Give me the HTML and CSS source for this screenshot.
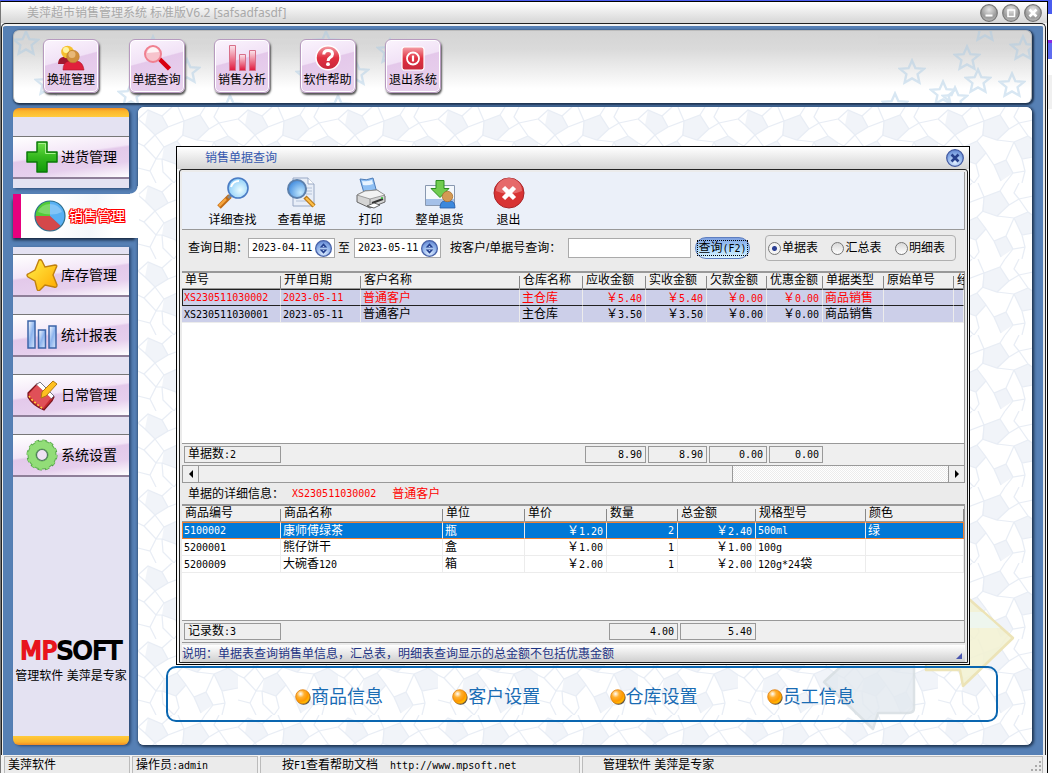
FILE: index.html
```html
<!DOCTYPE html>
<html lang="zh-CN">
<head>
<meta charset="utf-8">
<title>美萍超市销售管理系统</title>
<link rel="stylesheet" href="styles.css">
</head>
<body>
<svg class="defs" aria-hidden="true">
  <defs>
    <linearGradient id="gRed" x1="0" y1="0" x2="0" y2="1"><stop offset="0" stop-color="#f5a0a8"/><stop offset=".5" stop-color="#e03040"/><stop offset="1" stop-color="#c8283c"/></linearGradient>
    <linearGradient id="gBar" x1="0" y1="0" x2="0" y2="1"><stop offset="0" stop-color="#fbe6ee"/><stop offset="1" stop-color="#e0183c"/></linearGradient>
    <linearGradient id="gBlueBar" x1="0" y1="0" x2="1" y2="1"><stop offset="0" stop-color="#ffffff"/><stop offset=".5" stop-color="#8db4ee"/><stop offset="1" stop-color="#d6e6fb"/></linearGradient>
    <linearGradient id="gGreen" x1="0" y1="0" x2="0" y2="1"><stop offset="0" stop-color="#6fe04a"/><stop offset=".5" stop-color="#34b81e"/><stop offset="1" stop-color="#119a08"/></linearGradient>
    <linearGradient id="gStar" x1="0" y1="0" x2="1" y2="1"><stop offset="0" stop-color="#fff04a"/><stop offset="1" stop-color="#ffa800"/></linearGradient>
    <radialGradient id="gLens" cx=".6" cy=".6" r=".6"><stop offset="0" stop-color="#eafcff"/><stop offset="1" stop-color="#8ccdf8"/></radialGradient>
    <radialGradient id="gLensDark" cx=".7" cy=".7" r=".8"><stop offset="0" stop-color="#c4eaff"/><stop offset="1" stop-color="#3a86dc"/></radialGradient>
    <radialGradient id="gBall" cx=".35" cy=".3" r=".75"><stop offset="0" stop-color="#fff"/><stop offset=".35" stop-color="#ffb030"/><stop offset=".7" stop-color="#ff9800"/><stop offset="1" stop-color="#ffd000"/></radialGradient>
    <radialGradient id="gGray" cx=".5" cy=".3" r=".7"><stop offset="0" stop-color="#e4e4e4"/><stop offset=".7" stop-color="#9a9a9a"/><stop offset="1" stop-color="#bcbcbc"/></radialGradient>
    <radialGradient id="gBlue" cx=".5" cy=".75" r=".75"><stop offset="0" stop-color="#e2efff"/><stop offset=".6" stop-color="#8fb2ea"/><stop offset="1" stop-color="#5f83cf"/></radialGradient>
    <pattern id="stone" width="100" height="76" patternUnits="userSpaceOnUse">
      <rect width="100" height="76" fill="#fff"/>
      <path fill="#f1f4f9" d="M10 3l14 6 6 11-13 8-10-10zM46 14l16-6 9 14-12 11-15-5zM76 35l14-6 10 7v13l-16 3zM26 40l13-6 9 12-10 11-14-5zM56 58l12-5 7 13-12 8z"/>
      <path fill="none" stroke="#e8edf5" stroke-width="1.2" d="M0 12l10-9 14 6 6 11-13 8-10-10-7-6M17 28L6 39l-6-3M17 28l9 12 13-6 6-6 1-14-16 6M24 9L34 0M46 14L40 0M46 14l16-6 9 14-12 11-15-5M62 8l5-8M71 22l10-6 19-4M81 16l-5-6 5-10M59 33l17 2 14-6-9-13M90 29l10 7M76 35l8 17 16-3M39 34l9 12-10 11-14-5-6 0-12-13M26 40l-8 12-6 12-12-3M48 46l8 12 12-5 8-18M56 58l7 16M68 53l7 13 12-2-3-12M38 57l3 12-5 7M75 66l-8 10M87 64l-3 12M24 52l1 13 11 11M12 64l6 12"/>
    </pattern>
    <symbol id="star" viewBox="-14 -14 28 28"><path d="M0-11.5L3.4-3.8 12-3.2 5.6 2.2 7.4 10.6 0 6.4-7.4 10.6-5.6 2.2-12-3.2-3.4-3.8z" fill="none" stroke="#a9cbe4" stroke-width="2.4"/></symbol>
    <symbol id="ball" viewBox="0 0 16 16"><circle cx="8.6" cy="8.8" r="7" fill="#554"/><circle cx="7.7" cy="7.7" r="7" fill="url(#gBall)" stroke="#e08010" stroke-width=".8"/></symbol>
    <symbol id="spin" viewBox="0 0 16 16"><circle cx="8" cy="8" r="7.4" fill="url(#gBlue)" stroke="#4862a8" stroke-width="1.2"/><path d="M8 3l3.6 4H4.400zM8 13l3.600-4H4.400z" fill="#233f8e"/><path d="M8 5.400l1 1.300H7zM8 10.600l1-1.300H7z" fill="#bcd2f8"/></symbol>
  </defs>
</svg>

<div class="app">
  <header class="titlebar">
    <h1 class="titlebar-text">美萍超市销售管理系统 标准版V6.2 [safsadfasdf]</h1>
    <div class="window-buttons">
      <button class="round" aria-label="最小化"><svg viewBox="0 0 18 18"><circle cx="9" cy="9" r="8.3" fill="url(#gGray)" stroke="#777" stroke-width="1.2"/><path d="M5.5 11.5h7" stroke="#fff" stroke-width="2"/></svg></button>
      <button class="round" aria-label="最大化"><svg viewBox="0 0 18 18"><circle cx="9" cy="9" r="8.3" fill="url(#gGray)" stroke="#777" stroke-width="1.2"/><path d="M6 6h6.500v6.500H6z" fill="none" stroke="#fff" stroke-width="1.6"/></svg></button>
      <button class="round" aria-label="关闭"><svg viewBox="0 0 18 18"><circle cx="9" cy="9" r="8.3" fill="url(#gGray)" stroke="#777" stroke-width="1.2"/><path d="M5.500 5.500l7 7M12.500 5.500l-7 7" stroke="#fff" stroke-width="2.6"/></svg></button>
    </div>
  </header>

  <div class="frame">
    <nav class="toolbar" aria-label="常用功能">
      <svg class="stars stars-left" viewBox="0 0 400 73" aria-hidden="true">
        <use href="#star" x="-2" y="-2" width="28" height="28"/><use href="#star" x="20" y="38" width="28" height="28"/><use href="#star" x="103" y="50" width="28" height="28"/><use href="#star" x="159" y="26" width="28" height="28"/><use href="#star" x="125" y="3" width="28" height="28"/><use href="#star" x="202" y="62" width="28" height="28"/><use href="#star" x="298" y="-2" width="28" height="28"/><use href="#star" x="310" y="62" width="28" height="28"/><use href="#star" x="281" y="30" width="28" height="28"/><use href="#star" x="328" y="28" width="28" height="28"/><use href="#star" x="362" y="6" width="28" height="28"/>
      </svg>
      <svg class="stars stars-right" viewBox="0 0 170 73" aria-hidden="true">
        <use href="#star" x="110" y="-16" width="28" height="28"/><use href="#star" x="148" y="3" width="28" height="28"/><use href="#star" x="92" y="13" width="28" height="28"/><use href="#star" x="37" y="27" width="28" height="28"/><use href="#star" x="103" y="36" width="28" height="28"/><use href="#star" x="137" y="40" width="28" height="28"/><use href="#star" x="68" y="48" width="28" height="28"/><use href="#star" x="80" y="54" width="28" height="28"/><use href="#star" x="20" y="60" width="28" height="28"/>
      </svg>
      <div class="toolbar-buttons">
        <button class="tile"><svg viewBox="0 0 28 26"><path d="M1 19q0-6 5-7h7q4 1 4 7z" fill="#a01830"/><circle cx="10.500" cy="7" r="6.300" fill="#f5c02e"/><circle cx="9" cy="5" r="3" fill="#fff2a0"/><path d="M6 25q0-8 6-9h8q6 1 7 9z" fill="#e0203c" stroke="#b01028" stroke-width=".6"/><circle cx="16" cy="11.500" r="6.300" fill="#cf8f3c" stroke="#b0742c" stroke-width=".5"/><circle cx="15" cy="9.500" r="3.500" fill="#e8b878"/></svg><span>换班管理</span></button>
        <button class="tile"><svg viewBox="0 0 28 26"><path d="M16.500 14l10 10" stroke="#d80010" stroke-width="4.500"/><circle cx="10" cy="9" r="8" fill="#f7c3cc" stroke="#f08090" stroke-width="2"/><path d="M4 8q1-5 6-6 5 1 6 5z" fill="#fff" opacity=".8"/></svg><span>单据查询</span></button>
        <button class="tile"><svg viewBox="0 0 28 26"><g fill="url(#gBar)" stroke="#d8708a" stroke-width="1"><path d="M1.500.500h6v25h-6z"/><path d="M11.500 9.500h6v16h-6z"/><path d="M21.500 5.500h6v20h-6z"/></g></svg><span>销售分析</span></button>
        <button class="tile"><svg viewBox="0 0 28 26"><circle cx="14" cy="12.800" r="12" fill="url(#gRed)" stroke="#fff" stroke-width="1.500"/><path d="M9.800 9.500q0-4 4.300-4t4.400 3.600q0 2-2.400 3.500-2 1.200-2 3.400" fill="none" stroke="#fff" stroke-width="3"/><circle cx="14" cy="19.200" r="1.900" fill="#fff"/></svg><span>软件帮助</span></button>
        <button class="tile"><svg viewBox="0 0 28 26"><rect x="3" y="2" width="22" height="23" rx="2.500" fill="url(#gRed)" stroke="#fff" stroke-width="1.200"/><circle cx="14" cy="13.500" r="6" fill="none" stroke="#fff" stroke-width="1.800"/><path d="M14 10.500v6" stroke="#fff" stroke-width="2.200"/></svg><span>退出系统</span></button>
      </div>
    </nav>

    <div class="workspace">
      <nav class="sidebar" aria-label="主菜单">
        <div class="side-group side-top">
          <button class="side-item"><svg viewBox="0 0 32 32"><path d="M11 1h10v10h10v10H21v10H11V21H1V11h10z" fill="url(#gGreen)" stroke="#0b7a08" stroke-width="1.500" stroke-linejoin="round"/><path d="M12.500 2.500h7v10h10" fill="none" stroke="#a8f090" stroke-width="1"/></svg><span>进货管理</span></button>
        </div>
        <button class="side-active"><svg viewBox="0 0 32 32"><circle cx="16" cy="16" r="15" fill="#2d94ea"/><path d="M16 16V1a15 15 0 0 1 11 25z" fill="#58b0f4"/><path d="M16 16H1A15 15 0 0 1 16 1z" fill="#52cc38"/><path d="M16 16L27 26.200A15 15 0 0 1 1 16z" fill="#d4484a"/><path d="M4 12a13 13 0 0 1 24 0q-10 5-24 0z" fill="#fff" opacity=".25"/><circle cx="16" cy="16" r="15" fill="none" stroke="#2f6f8c" stroke-width="1.200"/></svg><span>销售管理</span></button>
        <div class="side-group side-rest">
          <button class="side-item"><svg viewBox="0 0 32 32"><path d="M13 1q2-1 3 1l3 6 10-2q3 0 1 3l-3 7 4 10q0 3-3 2l-9-2-5 5q-2 2-3-1l-2-8-7-4q-2-2 0-3l7-4z" fill="url(#gStar)" stroke="#c08010" stroke-width="1.400"/></svg><span>库存管理</span></button>
          <button class="side-item"><svg viewBox="0 0 32 32"><g fill="url(#gBlueBar)" stroke="#3c64a8" stroke-width="1.500"><path d="M2 2h7v27H2z"/><path d="M12.500 11h7v18h-7z"/><path d="M23 7h7v22h-7z"/></g></svg><span>统计报表</span></button>
          <button class="side-item"><svg viewBox="0 0 32 32"><path d="M2 14L11 5l5 2 4 5 8 6-2 4-8 9q-12-5-16-13z" fill="#c82830" stroke="#7a1820" stroke-width="1.200"/><path d="M10 6l4-3 14 14-3 3z" fill="#fff" stroke="#556" stroke-width=".8"/><path d="M3 15l8-9 14 13-8 10q-9-5-14-14z" fill="#e05058"/><path d="M3 17l4 5 5 4 5 4" fill="none" stroke="#ffd040" stroke-width="1.600" stroke-dasharray="2 2"/><path d="M27 2l4 3-11 12-5 2 1-6z" fill="#ffc020" stroke="#b07810" stroke-width="1"/></svg><span>日常管理</span></button>
          <button class="side-item"><svg viewBox="0 0 32 32"><circle cx="16" cy="16" r="13.500" fill="none" stroke="#4a9a40" stroke-width="4" stroke-dasharray="4 3.060"/><circle cx="16" cy="16" r="10" fill="none" stroke="#5fae50" stroke-width="9"/><circle cx="16" cy="16" r="13" fill="none" stroke="#8fdc74" stroke-width="4" stroke-dasharray="3 3.800"/><circle cx="16" cy="16" r="10" fill="none" stroke="#92dd78" stroke-width="7"/><circle cx="16" cy="16" r="5.500" fill="#efe2f4" stroke="#4c7c58" stroke-width="1.200"/></svg><span>系统设置</span></button>
          <div class="brand">
            <div class="logo"><span class="logo-mp">MP</span><span>SOFT</span></div>
            <p class="brand-text">管理软件 美萍是专家</p>
          </div>
        </div>
      </nav>

      <main class="main">
        <svg class="stone" aria-hidden="true"><rect width="100%" height="100%" fill="url(#stone)"/></svg>
        <svg class="arrows" viewBox="0 0 196 145" aria-hidden="true">
          <path d="M141 2l52 46-50 48-3-16h-34V20h35z" fill="#f3f2d4" stroke="#ece2b0" stroke-width="2.500" stroke-linejoin="round" opacity=".9"/>
          <path d="M130 22h32l18 16h-50z" fill="#eef6ee"/>
          <path d="M4 92L50 50v12h38q6 0 6 6v50q0 5-6 5H58l-5 16z" fill="#e4eaf0" stroke="#d7dee2" stroke-width="2.500" stroke-linejoin="round" opacity=".85"/>
        </svg>
        <nav class="quick" aria-label="快捷设置">
          <a href="#"><svg><use href="#ball"/></svg>商品信息</a>
          <a href="#"><svg><use href="#ball"/></svg>客户设置</a>
          <a href="#"><svg><use href="#ball"/></svg>仓库设置</a>
          <a href="#"><svg><use href="#ball"/></svg>员工信息</a>
        </nav>

        <section class="dialog" role="dialog" aria-labelledby="dlg-title">
          <header class="dialog-title">
            <h2 id="dlg-title">销售单据查询</h2>
            <button class="round" aria-label="关闭窗口"><svg viewBox="0 0 18 18"><circle cx="9" cy="9" r="8.300" fill="url(#gBlue)" stroke="#4058a0" stroke-width="1.200"/><path d="M5.500 5.500l7 7M12.500 5.500l-7 7" stroke="#27408c" stroke-width="2.600"/></svg></button>
          </header>
          <div class="dialog-frame">
            <div class="actions">
              <button><svg viewBox="0 0 32 32"><path d="M2 30l11-11" stroke="#c06a14" stroke-width="5"/><path d="M2 29l7-7" stroke="#f5a43c" stroke-width="2.500"/><path d="M11 21l3-3" stroke="#888" stroke-width="3"/><circle cx="21" cy="11" r="10" fill="url(#gLens)" stroke="#4a7cc4" stroke-width="1.600"/><path d="M14 10q2-6 8-6" fill="none" stroke="#fff" stroke-width="2"/></svg><span>详细查找</span></button>
              <button><svg viewBox="0 0 32 32"><path d="M7 1h15l6 6v22H7z" fill="#e8eef8" stroke="#98a8c4"/><path d="M22 1v6h6" fill="#fff" stroke="#98a8c4"/><path d="M18 11h8M20 14h6M20 17h6M10 24h10" stroke="#b4c2d8"/><path d="M19 20l9 9" stroke="#b87818" stroke-width="4.500"/><path d="M20 21l8 8" stroke="#ffc048" stroke-width="2.200"/><circle cx="11" cy="12" r="9" fill="url(#gLensDark)" stroke="#5c80ac" stroke-width="2"/></svg><span>查看单据</span></button>
              <button><svg viewBox="0 0 32 32"><path d="M5 2q6 2 13-1l4 15H9z" fill="#8fc0f4" stroke="#4c7cb8"/><path d="M7 4q5 1 10-1l1 4q-5 2-10 1z" fill="#e8f4ff"/><path d="M2 18l8-4 12-1 8 6v6l-15 6L2 25z" fill="#d4d4d4" stroke="#666"/><path d="M2 18l13 4 15-4-8-5-12 1z" fill="#f2f2f2" stroke="#888" stroke-width=".8"/><path d="M15 22v9" stroke="#888"/><path d="M17 26l11-4" stroke="#333" stroke-width="2"/><path d="M12 29l7 2 6-3-6-2z" fill="#fff" stroke="#444" stroke-width=".8"/><path d="M26 21h2" stroke="#30c030" stroke-width="1.500"/></svg><span>打印</span></button>
              <button><svg viewBox="0 0 32 32"><path d="M1.500 8.500h29v20h-29z" fill="#f4f8fc" stroke="#8898b0"/><path d="M2 22h28v6H2z" fill="#a4c0e8"/><path d="M12 3.500h8v8h5l-9 9-9-9h5z" fill="#70cc50" stroke="#2c8c20"/><path d="M16 31q0-7 5-7h5q5 0 5 7z" fill="#3c88dc" stroke="#245ca8" stroke-width=".8"/><circle cx="23.500" cy="19.500" r="5.200" fill="#d49a54" stroke="#a87030" stroke-width=".8"/></svg><span>整单退货</span></button>
              <button><svg viewBox="0 0 32 32"><circle cx="16" cy="16" r="15" fill="#d83434" stroke="#a82428"/><path d="M3 14a13 13 0 0 1 26 0q-13 6-26 0z" fill="#f09090" opacity=".6"/><path d="M10.500 10.500l11 11M21.500 10.500l-11 11" stroke="#fff" stroke-width="4.500"/></svg><span>退出</span></button>
            </div>

            <form class="query">
              <label for="from">查询日期：</label>
              <div class="date"><input id="from" type="text" value="2023-04-11"><button type="button" aria-label="选择开始日期"><svg><use href="#spin"/></svg></button></div>
              <label class="to" for="until">至</label>
              <div class="date"><input id="until" type="text" value="2023-05-11"><button type="button" aria-label="选择结束日期"><svg><use href="#spin"/></svg></button></div>
              <label class="key" for="key">按客户/单据号查询：</label>
              <input class="keyword" id="key" type="text">
              <button class="search" type="button"><span class="focus">查询<span class="m">(F2)</span></span></button>
              <fieldset class="views">
                <label><input type="radio" name="view" checked>单据表</label>
                <label><input type="radio" name="view">汇总表</label>
                <label><input type="radio" name="view">明细表</label>
              </fieldset>
            </form>

            <div class="grid-area bills">
              <table>
                <colgroup><col class="c99"><col class="c80"><col class="c159"><col class="c63"><col class="c63"><col class="c61"><col class="c60"><col class="c56"><col class="c61"><col class="c70"><col></colgroup>
                <thead><tr><th>单号</th><th>开单日期</th><th>客户名称</th><th>仓库名称</th><th>应收金额</th><th>实收金额</th><th>欠款金额</th><th>优惠金额</th><th>单据类型</th><th>原始单号</th><th>经</th></tr></thead>
                <tbody>
                  <tr class="current"><td class="m">XS230511030002</td><td class="m">2023-05-11</td><td>普通客户</td><td>主仓库</td><td class="r">￥<span class="m">5.40</span></td><td class="r">￥<span class="m">5.40</span></td><td class="r">￥<span class="m">0.00</span></td><td class="r">￥<span class="m">0.00</span></td><td>商品销售</td><td></td><td></td></tr>
                  <tr><td class="m">XS230511030001</td><td class="m">2023-05-11</td><td>普通客户</td><td>主仓库</td><td class="r">￥<span class="m">3.50</span></td><td class="r">￥<span class="m">3.50</span></td><td class="r">￥<span class="m">0.00</span></td><td class="r">￥<span class="m">0.00</span></td><td>商品销售</td><td></td><td></td></tr>
                </tbody>
              </table>
            </div>
            <div class="totals totals-bills">
              <div class="count">单据数<span class="m">:2</span></div>
              <div class="m sum sum-first">8.90</div><div class="m sum">8.90</div><div class="m sum">0.00</div><div class="m sum">0.00</div>
            </div>
            <div class="scroll">
              <button aria-label="向左滚动"><svg viewBox="0 0 8 8"><path d="M6 0v8L2 4z"/></svg></button>
              <div class="thumb"></div>
              <div class="track"></div>
              <button aria-label="向右滚动"><svg viewBox="0 0 8 8"><path d="M2 0v8l4-4z"/></svg></button>
            </div>
            <div class="detail-label"><span>单据的详细信息：</span><span class="m red">XS230511030002</span><span class="red customer">普通客户</span></div>

            <div class="grid-area items">
              <table>
                <colgroup><col class="c99"><col class="c162"><col class="c82"><col class="c82"><col class="c71"><col class="c78"><col class="c110"><col></colgroup>
                <thead><tr><th>商品编号</th><th>商品名称</th><th>单位</th><th>单价</th><th>数量</th><th>总金额</th><th>规格型号</th><th>颜色</th></tr></thead>
                <tbody>
                  <tr class="current"><td class="m">5100002</td><td>康师傅绿茶</td><td>瓶</td><td class="r">￥<span class="m">1.20</span></td><td class="r m">2</td><td class="r">￥<span class="m">2.40</span></td><td class="m">500ml</td><td>绿</td></tr>
                  <tr><td class="m">5200001</td><td>熊仔饼干</td><td>盒</td><td class="r">￥<span class="m">1.00</span></td><td class="r m">1</td><td class="r">￥<span class="m">1.00</span></td><td class="m">100g</td><td></td></tr>
                  <tr><td class="m">5200009</td><td>大碗香<span class="m">120</span></td><td>箱</td><td class="r">￥<span class="m">2.00</span></td><td class="r m">1</td><td class="r">￥<span class="m">2.00</span></td><td><span class="m">120g*24</span>袋</td><td></td></tr>
                </tbody>
              </table>
            </div>
            <div class="totals totals-items">
              <div class="count">记录数<span class="m">:3</span></div>
              <div class="m sum sum-first">4.00</div><div class="m sum">5.40</div>
            </div>
            <footer class="hint"><span>说明：单据表查询销售单信息，汇总表，明细表查询显示的总金额不包括优惠金额</span><i></i></footer>
          </div>
        </section>
      </main>
    </div>
  </div>

  <footer class="status">
    <div>美萍软件</div>
    <div>操作员<span class="m">:admin</span></div>
    <div class="help">按<span class="m">F1</span>查看帮助文档<a class="m" href="#">http://www.mpsoft.net</a></div>
    <div class="maker">管理软件 美萍是专家<svg viewBox="0 0 12 12" aria-hidden="true"><path d="M9 0h2v2H9zM9 4h2v2H9zM5 4h2v2H5zM9 8h2v2H9zM5 8h2v2H5zM1 8h2v2H1z" fill="#aaa"/></svg></div>
  </footer>
</div>
</body>
</html>
```

FILE: styles.css
```css
* {
  box-sizing: border-box;
}

body {
  margin: 0;
  height: 100vh;
  padding: 1px 4px 0 0;
  overflow: hidden;
  background: linear-gradient(#4a5cf0 0 14px, #fff 14px 40px, #8a2be2 40px 43px, #5f6cf0 43px 59px, #fff 59px 75px, #f0f0f0 75px 109px, #fff 109px);
  background-color: #fff;
  font: 12px/16px "Liberation Sans", "Noto Sans CJK SC", sans-serif;
  color: #000;
}

h1, h2, p, fieldset {
  margin: 0;
  padding: 0;
  border: 0;
  font-size: 12px;
  font-weight: normal;
}

button, input {
  margin: 0;
  padding: 0;
  border: 0;
  background: none;
  font: inherit;
  color: inherit;
}

button svg {
  display: block;
}

.defs {
  position: absolute;
  width: 0;
  height: 0;
}

.m {
  font-family: "DejaVu Sans Mono", "Noto Sans CJK SC", monospace;
  font-size: 10px;
}

span.m {
  line-height: 10px;
}

.red {
  color: #f00;
}

.round,
.round svg {
  width: 18px;
  height: 18px;
}

/* Application window */
.app {
  display: flex;
  flex-direction: column;
  height: 100%;
  border: 1px solid #000;
  border-left-color: #777;
  border-bottom: 0;
  background: #f4f4f4;
}

.titlebar {
  display: flex;
  flex: none;
  align-items: center;
  justify-content: space-between;
  height: 21px;
  padding: 0 5px 0 26px;
  background: linear-gradient(#fff, #d6d6d6);
}

.titlebar-text {
  font-family: "Noto Sans", "Noto Sans CJK SC", sans-serif;
  color: #a9a9a9;
}

.window-buttons {
  display: flex;
  gap: 4px;
}

.frame {
  display: flex;
  flex: 1;
  flex-direction: column;
  gap: 4px;
  min-height: 0;
  margin-right: 1px;
  padding: 6px 13px 10px 11px;
  border: 1px solid #222;
  border-bottom: 0;
  border-radius: 5px 5px 0 0;
  background: #5680b5;
  box-shadow: inset 0 2px #f2f2f2, inset -2px 0 #e8e8e8, inset 1px 0 #eee;
}

/* Top toolbar */
.toolbar {
  position: relative;
  flex: none;
  padding: 8px 29px 10px;
  overflow: hidden;
  border: 1px solid #bbb;
  border-width: 1px 1px 0;
  border-radius: 6px;
  background: linear-gradient(#d4d4d4 0, #dadada 25%, #fff 80%);
  box-shadow: 1px 1px 2px 1px #1e3350;
}

.stars {
  position: absolute;
  top: 0;
  height: 73px;
  opacity: 0.45;
}

.stars-left {
  left: 0;
  width: 400px;
}

.stars-right {
  right: 0;
  width: 170px;
}

.toolbar-buttons {
  position: relative;
  display: flex;
  justify-content: space-between;
  max-width: 398px;
}

.tile {
  display: flex;
  flex-direction: column;
  align-items: center;
  gap: 1px;
  width: 56px;
  height: 54px;
  padding-top: 5px;
  border: 1px solid #b79abf;
  border-radius: 6px;
  background: linear-gradient(165deg, #fbf4fd 0, #f1e2f6 38%, #e4c8ea 40%, #e9d3ee 100%);
  box-shadow: inset 0 0 0 1px #fff, 1px 2px 2px #555;
}

.tile svg {
  width: 28px;
  height: 26px;
}

/* Sidebar */
.workspace {
  display: flex;
  flex: 1;
  gap: 9px;
  min-height: 0;
}

.sidebar {
  display: flex;
  flex: none;
  flex-direction: column;
  width: 116px;
  padding-top: 1px;
}

.side-group {
  display: flex;
  flex-direction: column;
  gap: 17px;
  box-shadow: 2px 1px 3px #2c4a75;
}

.side-top {
  padding: 28px 0 9px;
  border-radius: 6px 6px 0 0;
  background: linear-gradient(#f08a24, #fbb52c 3px, #ffcb3c 9px, #e4e2f2 9px);
}

.side-rest {
  flex: 1;
  padding: 7px 0 9px;
  border-radius: 0 0 6px 6px;
  background: linear-gradient(to top, #f08a24, #fbb52c 3px, #ffcb3c 9px, #e4e2f2 9px);
}

.side-item {
  display: flex;
  align-items: center;
  gap: 3px;
  height: 43px;
  padding-left: 13px;
  border-top: 1px solid #777;
  border-bottom: 2px solid #8f7f99;
  background: linear-gradient(172deg, #fff 0, #f3e6f7 42%, #e3c9ea 46%, #e6cfed 72%, #fff 100%);
  font-size: 14px;
}

.side-item svg,
.side-active svg {
  width: 32px;
  height: 32px;
}

.side-active {
  position: relative;
  z-index: 1;
  display: flex;
  align-items: center;
  gap: 3px;
  height: 44px;
  margin: 6px -10px 9px 0;
  padding-left: 13px;
  border-left: 8px solid #e6007e;
  background: linear-gradient(100deg, #fff 30%, #f4f7fb 60%, #fff 80%);
  box-shadow: -2px 4px 3px -2px #14243c;
  font-size: 14px;
  color: #fff;
  text-shadow: 1px 0 #f00, -1px 0 #f00, 0 1px #f00, 0 -1px #f00, 1px 1px #f00, -1px -1px #f00, 1px -1px #f00, -1px 1px #f00;
}

/* Concave corner that joins the open tab to the main panel */
.side-active::before {
  content: "";
  position: absolute;
  right: 1px;
  bottom: 100%;
  width: 8px;
  height: 8px;
  background: radial-gradient(circle at 0 0, transparent 7px, #fff 8px);
}

.brand {
  margin-top: auto;
  padding-bottom: 52px;
  text-align: center;
}

.logo {
  font: 25px/24px "DejaVu Sans", sans-serif;
  -webkit-text-stroke: 2px currentColor;
}

.logo-mp {
  color: #e8141c;
}

.brand-text {
  margin-top: 5px;
  white-space: nowrap;
}

/* Main panel */
.main {
  position: relative;
  display: flex;
  flex: 1;
  flex-direction: column;
  justify-content: flex-end;
  min-width: 0;
  padding: 0 34px 23px 28px;
  border-radius: 6px;
  background: #fff;
  box-shadow: 1px 1px 3px 1px #1e3350;
}

.stone {
  position: absolute;
  top: 0;
  left: 0;
  width: 100%;
  height: 100%;
  border-radius: 6px;
}

.arrows {
  position: absolute;
  right: 16px;
  bottom: 10px;
  width: 196px;
  height: 145px;
}

.quick {
  position: relative;
  display: grid;
  grid-template-columns: repeat(4, 1fr);
  height: 56px;
  padding: 0 72px 0 127px;
  border: 2px solid #0a66b0;
  border-radius: 10px;
}

.quick a {
  display: flex;
  align-items: center;
  padding-top: 6px;
  font-size: 18px;
  line-height: 24px;
  color: #1a6cb4;
  text-decoration: none;
}

.quick svg {
  width: 16px;
  height: 16px;
}

/* Query dialog */
.dialog {
  position: absolute;
  inset: 39px 62px 80px 38px;
  display: flex;
  flex-direction: column;
  border: 1px solid #000;
  background: #f6f6f6;
}

.dialog-title {
  display: flex;
  flex: none;
  align-items: center;
  justify-content: space-between;
  height: 22px;
  padding: 0 5px 0 28px;
  background: linear-gradient(#fff, #d4d4d4);
  color: #3558ae;
}

.dialog-frame {
  display: flex;
  flex: 1;
  flex-direction: column;
  min-height: 0;
  margin: 0 1px 1px 2px;
  padding: 2px 2px 0;
  border: 1px solid #222;
  border-radius: 3px 3px 0 0;
  background: #ebebeb;
}

.actions {
  display: flex;
  flex: none;
  height: 58px;
  padding: 5px 0 0 16px;
  border-right: 1px solid #999;
  border-bottom: 1px solid #999;
  background: #ebf0f9;
}

.actions button {
  display: flex;
  flex-direction: column;
  align-items: center;
  gap: 3px;
  width: 69px;
}

.actions svg {
  width: 32px;
  height: 32px;
}

.query {
  display: flex;
  flex: none;
  align-items: center;
  height: 41px;
  padding: 0 9px 5px 6px;
  white-space: nowrap;
}

.date {
  display: flex;
  align-items: center;
  width: 87px;
  height: 20px;
  padding-right: 2px;
  border: 1px solid #aaa;
  background: #fff;
}

.date input {
  flex: 1;
  min-width: 0;
  padding-left: 3px;
  font-family: "DejaVu Sans Mono", monospace;
  font-size: 10px;
}

.date svg {
  width: 17px;
  height: 17px;
}

.to {
  padding: 0 4px 0 3px;
}

.key {
  width: 127px;
  padding-left: 9px;
}

.keyword {
  flex: 1;
  min-width: 0;
  height: 20px;
  border: 1px solid #aaa;
  background: #fff;
}

.search {
  width: 55px;
  height: 22px;
  margin: 0 15px 0 4px;
  border: 1px solid #5f7fc0;
  border-radius: 11px;
  background: linear-gradient(#7d9fe0, #a8d4fb 50%, #d8f2ff);
}

.focus {
  display: block;
  margin: 0 1px;
  border: 1px dotted #000;
  line-height: 14px;
}

.views {
  display: flex;
  justify-content: space-between;
  width: 191px;
  height: 26px;
  padding: 0 10px 0 2px;
  border: 1px solid #b0b0b0;
  border-radius: 4px;
}

.views label {
  display: flex;
  align-items: center;
  gap: 1px;
}

.views input {
  width: 13px;
  height: 13px;
  appearance: none;
  border: 1px solid #777;
  border-radius: 50%;
  background: linear-gradient(#d8d8d8, #fff);
}

.views input:checked {
  background: radial-gradient(circle, #2b3f94 0 2px, #f4f4f4 3px);
}

/* Data grids */
.grid-area {
  min-height: 0;
  overflow: hidden;
  border: 1px solid #999;
  border-top-width: 2px;
  border-left: 0;
  background: #fff;
}

.bills {
  flex: 3 1 0;
}

.items {
  flex: 2 1 0;
}

table {
  width: 100%;
  table-layout: fixed;
  border-spacing: 0;
}

th, td {
  height: 17px;
  padding: 0 0 0 2px;
  overflow: hidden;
  line-height: 15px;
  white-space: nowrap;
  text-align: left;
  font-weight: normal;
}

th {
  height: 16px;
  background: linear-gradient(#888, #888) right 3px / 1px 12px no-repeat #efefef;
  border-bottom: 1px solid #999;
  padding-left: 3px;
}

td {
  border-right: 1px solid #ececec;
  border-bottom: 1px solid #ececec;
}

td.r {
  padding: 0 3px 0 0;
  text-align: right;
}

.c56 { width: 56px; }
.c60 { width: 60px; }
.c61 { width: 61px; }
.c63 { width: 63px; }
.c70 { width: 70px; }
.c71 { width: 71px; }
.c78 { width: 78px; }
.c80 { width: 80px; }
.c82 { width: 82px; }
.c99 { width: 99px; }
.c110 { width: 110px; }
.c159 { width: 159px; }
.c162 { width: 162px; }

.bills td {
  background: #cccfe9;
}

.bills .current td {
  border-top: 1px solid #222;
  border-bottom-color: #222;
  color: #f00;
  line-height: 14px;
}

.items .current td {
  border-top: 1px solid #f08030;
  border-bottom-color: #f08030;
  background: #0078d7;
  color: #fff;
  line-height: 14px;
}

.current td:first-child {
  border-left: 1px solid #222;
  padding-left: 1px;
}

.items .current td:first-child {
  border-left-color: #f08030;
}

.items .current td:last-child {
  border-right-color: #f08030;
}

.totals {
  display: grid;
  flex: none;
  align-items: center;
  height: 21px;
  border-right: 1px solid #999;
  background: #efefef;
}

.totals-bills {
  grid-template-columns: 99px 80px 159px 63px 63px 61px 60px 56px 1fr;
}

.totals-items {
  grid-template-columns: 99px 162px 82px 82px 71px 78px 1fr;
  height: 22px;
  margin-bottom: 2px;
  border-bottom: 1px solid #999;
}

.totals > div {
  height: 17px;
  margin-left: 2px;
  padding: 0 3px;
  border: 1px solid #999;
  line-height: 15px;
}

.totals .sum {
  text-align: right;
}

.sum-first {
  grid-column: 5;
}

.scroll {
  display: flex;
  flex: none;
  height: 18px;
  border: 1px solid #999;
  border-width: 1px 0;
  background: #efefef;
}

.scroll button {
  width: 17px;
  padding-left: 4px;
  border: 1px solid #999;
  border-width: 0 1px;
}

.scroll svg {
  width: 8px;
  height: 8px;
}

.thumb {
  flex: 533 1 0;
  border-right: 1px solid #999;
}

.track {
  flex: 215 1 0;
  background: repeating-conic-gradient(#ececec 0 25%, #fff 0 50%) 0 0 / 2px 2px;
}

.detail-label {
  display: flex;
  flex: none;
  gap: 8px;
  align-items: center;
  height: 21px;
  padding-left: 6px;
}

.customer {
  padding-left: 8px;
}

.hint {
  display: flex;
  flex: none;
  align-items: flex-end;
  justify-content: space-between;
  height: 17px;
  background: linear-gradient(#fff, #cfcfcf);
  color: #1d3484;
  line-height: 16px;
}

.hint i {
  margin: 0 3px 3px 0;
  border: 3px solid #4a56b0;
  border-top-color: transparent;
  border-left-color: transparent;
}

/* Status bar */
.status {
  display: flex;
  flex: none;
  gap: 2px;
  height: 18px;
  padding: 1px 4px 0 3px;
  background: #f2f2f2;
}

.status > div {
  flex: 0 0 126px;
  height: 20px;
  padding-left: 3px;
  border: 1px solid #bbb;
  background: #ebebeb;
  white-space: nowrap;
}

.status > .help {
  flex-basis: 320px;
  padding-left: 21px;
}

.help a {
  margin-left: 12px;
  color: inherit;
  text-decoration: none;
}

.status > .maker {
  display: flex;
  flex: 1;
  justify-content: space-between;
  padding: 0 0 0 20px;
}

.maker svg {
  width: 12px;
  height: 12px;
  margin-top: 4px;
}
```
